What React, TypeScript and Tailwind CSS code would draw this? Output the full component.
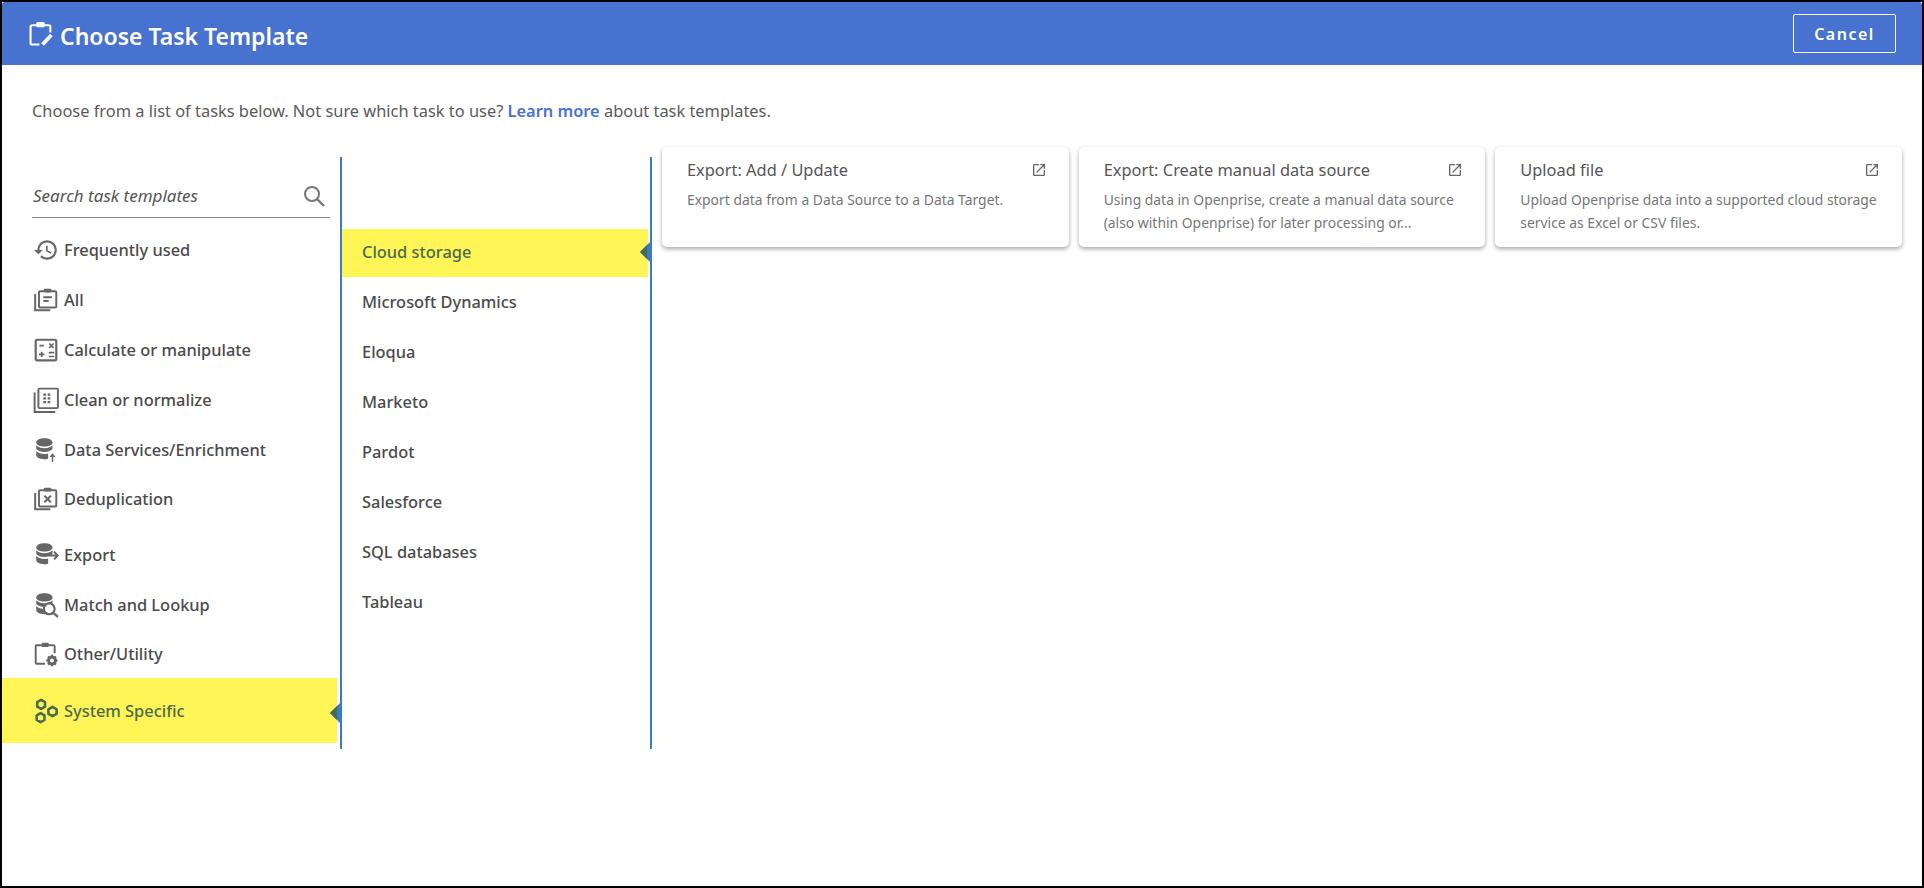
import React from "react";

const FONT = { fontFamily: '"Noto Sans", "Open Sans", sans-serif' };

function Ic({ children, className = "" }: { children: React.ReactNode; className?: string }) {
  return (
    <svg viewBox="0 0 24 24" width="26" height="26" fill="none" stroke="currentColor" strokeWidth="1.8" className={className}>
      {children}
    </svg>
  );
}

const History = () => (
  <svg viewBox="0 0 24 24" width="26" height="26" fill="currentColor">
    <path d="M13 3a9 9 0 0 0-9 9H1l3.89 3.89.07.14L9 12H6c0-3.87 3.13-7 7-7s7 3.13 7 7-3.13 7-7 7c-1.93 0-3.68-.79-4.94-2.06l-1.42 1.42A8.954 8.954 0 0 0 13 21a9 9 0 0 0 0-18zm-1 5v5l4.28 2.54.72-1.21-3.5-2.08V8H12z" />
  </svg>
);
const ClipStack = ({ children }: { children?: React.ReactNode }) => (
  <Ic>
    <path d="M2 6.500v15h14" />
    <rect x="5.500" y="4" width="16" height="15" rx="1" />
    <rect x="10" y="1.500" width="7" height="3.500" rx="1" fill="currentColor" stroke="none" />
    {children}
  </Ic>
);
const Calc = () => (
  <Ic>
    <rect x="2.500" y="2.500" width="19" height="19" rx="1.500" strokeWidth="2" />
    <path d="M6 8h4M15 6l4 4M19 6l-4 4M5.500 16h5M8 13.500v5M14.500 14.500h5M14.500 18h5" strokeWidth="1.600" />
  </Ic>
);
const Grid = () => (
  <Ic>
    <path d="M1.500 5v18h19" />
    <rect x="5" y="1.500" width="18" height="18" rx="1" />
    <path d="M9.500 7h2.500M13.500 7h2.500M9.500 10.500h2.500M13.500 10.500h2.500M9.500 14h2.500M13.500 14h2.500" strokeWidth="2" />
  </Ic>
);
const Db = ({ children }: { children?: React.ReactNode }) => (
  <svg viewBox="0 0 24 24" width="26" height="26" fill="currentColor">
    <path d="M3 5c0-2.400 3.700-3.800 7.500-3.800S18 2.600 18 5s-3.700 3.800-7.500 3.800S3 7.400 3 5z" />
    <path d="M3 7.500c1.500 1.900 4.700 2.800 7.500 2.800s6-.9 7.500-2.800V11c-1.500 1.900-4.700 2.800-7.500 2.800S4.500 12.900 3 11z" />
    <path d="M3 13c1.500 1.900 4.700 2.800 7.500 2.800 1.200 0 2.500-.15 3.500-.5V20c-1.200.35-2.500.5-3.500.5-3.800 0-7.500-1.400-7.500-3.800z" />
    {children}
  </svg>
);
const Hex = () => (
  <svg viewBox="0 0 24 24" width="26" height="26" fill="none" stroke="currentColor" strokeWidth="2.400">
    <path d="M7.500 1.800l3.600 2.100v4.100l-3.600 2.100-3.600-2.100V3.900z" strokeLinejoin="round" />
    <path d="M18 8.200l3.800 2.200v4.200L18 16.800l-3.800-2.200v-4.200z" strokeLinejoin="round" />
    <path d="M7 14l3.600 2.100v4.100L7 22.300l-3.600-2.100v-4.100z" strokeLinejoin="round" />
  </svg>
);
const External = () => (
  <svg viewBox="0 0 24 24" width="16" height="16" fill="#666">
    <path d="M19 19H5V5h7V3H5a2 2 0 0 0-2 2v14a2 2 0 0 0 2 2h14c1.100 0 2-.9 2-2v-7h-2v7zM14 3v2h3.590l-9.830 9.830 1.410 1.410L19 6.410V10h2V3h-7z" />
  </svg>
);

const items: { label: string; icon: React.ReactNode; cls: string }[] = [
  { label: "Frequently used", icon: <History />, cls: "h-[50px] mt-[7px]" },
  {
    label: "All",
    icon: (
      <ClipStack>
        <path d="M9.500 9.500h8M9.500 13h5" />
      </ClipStack>
    ),
    cls: "h-[50px]",
  },
  { label: "Calculate or manipulate", icon: <Calc />, cls: "h-[50px]" },
  { label: "Clean or normalize", icon: <Grid />, cls: "h-[50px]" },
  {
    label: "Data Services/Enrichment",
    icon: (
      <Db>
        <path d="M18 23v-6.500M16 18.500l2-2.500 2 2.500" fill="none" stroke="currentColor" strokeWidth="1.300" />
      </Db>
    ),
    cls: "h-[50px]",
  },
  {
    label: "Deduplication",
    icon: (
      <ClipStack>
        <path d="M10.500 9l6 6M16.500 9l-6 6" />
      </ClipStack>
    ),
    cls: "h-[50px] -mt-px",
  },
  {
    label: "Export",
    icon: (
      <Db>
        <path d="M14.500 12.500h8M19.500 9l3.300 3.500-3.300 3.500" fill="none" stroke="currentColor" strokeWidth="1.800" />
      </Db>
    ),
    cls: "h-[50px] mt-[6px]",
  },
  {
    label: "Match and Lookup",
    icon: (
      <Db>
        <circle cx="15" cy="15.500" r="5" fill="#fff" stroke="currentColor" strokeWidth="2" />
        <path d="M18.500 19l4.500 4" fill="none" stroke="currentColor" strokeWidth="2.200" />
      </Db>
    ),
    cls: "h-[50px]",
  },
  {
    label: "Other/Utility",
    icon: (
      <Ic>
        <path d="M11 21H3.500a1 1 0 0 1-1-1V5a1 1 0 0 1 1-1H19a1 1 0 0 1 1 1v6" />
        <rect x="8" y="1.500" width="6.500" height="4" rx="1" fill="currentColor" stroke="none" />
        <circle cx="17.500" cy="18" r="3.200" strokeWidth="2.600" />
        <path d="M17.500 12.800v2M17.500 21.200v2M12.300 18h2M20.700 18h2M13.800 14.300l1.400 1.400M19.800 20.300l1.400 1.400M13.800 21.700l1.400-1.400M19.800 15.700l1.400-1.400" strokeWidth="2" />
      </Ic>
    ),
    cls: "h-[50px] -mt-px",
  },
];

const systems = ["Microsoft Dynamics", "Eloqua", "Marketo", "Pardot", "Salesforce", "SQL databases", "Tableau"];

const cards = [
  { t: "Export: Add / Update", d: "Export data from a Data Source to a Data Target." },
  {
    t: "Export: Create manual data source",
    d: "Using data in Openprise, create a manual data source (also within Openprise) for later processing or...",
  },
  { t: "Upload file", d: "Upload Openprise data into a supported cloud storage service as Excel or CSV files." },
];

const Arrow = ({ cls }: { cls: string }) => (
  <div className={`absolute ${cls} h-[20px] w-[10px] overflow-hidden`}>
    <div className="h-full w-full bg-[#3a7bc8] [clip-path:polygon(100%_0,0_50%,100%_100%)]" />
    <div className="absolute left-0 top-0 h-full w-[7px] bg-[#4a6b50] [clip-path:polygon(100%_15%,0_50%,100%_85%)]" />
  </div>
);

export default function App() {
  return (
    <div style={FONT} className="flex h-screen w-full flex-col overflow-hidden border-2 border-black bg-white text-[#555]">
      <header className="flex h-[63px] shrink-0 items-center justify-between rounded-t-[3px] bg-[#4872d0] pl-[27px] pr-[26px]">
        <div className="flex items-center gap-[6px] text-white">
          <svg viewBox="0 0 24 24" width="25" height="25" fill="none" stroke="#fff" strokeWidth="2">
            <path d="M10 22.500H3a1.500 1.500 0 0 1-1.500-1.500V5.500A1.500 1.500 0 0 1 3 4h16a1.500 1.500 0 0 1 1.500 1.500V11" />
            <rect x="7" y="1" width="8" height="5" rx="1.200" fill="#fff" stroke="none" />
            <path d="M13 22.500l8.500-9" strokeWidth="3.600" />
          </svg>
          <h1 className="pt-[5px] text-[23px] font-semibold leading-none">Choose Task Template</h1>
        </div>
        <button className="h-[39px] w-[103px] rounded-[2px] border border-white text-[16px] font-semibold tracking-[1.5px] text-white">
          Cancel
        </button>
      </header>

      <p className="ml-[30px] mt-[34px] text-[16.400px] leading-[24px] text-[#5a5a5a]">
        Choose from a list of tasks below. Not sure which task to use?{" "}
        <span className="font-semibold text-[#4872d0]">Learn more</span> about task templates.
      </p>

      <div className="mt-[24px] flex items-start">
        <div className="relative mt-[10px] h-[592px] w-[338px] shrink-0">
          <div className="ml-[30px] flex h-[61px] w-[298px] items-center justify-between border-b border-[#888] pl-[1px] pr-[4px] pt-[18px]">
            <span className="text-[17px] italic leading-[24px] text-[#555]">Search task templates</span>
            <svg viewBox="0 0 24 24" width="24" height="24" fill="none" stroke="#777" strokeWidth="2">
              <circle cx="10" cy="10" r="7" />
              <path d="M15 15l7 7" strokeWidth="2.400" />
            </svg>
          </div>
          {items.map((it) => (
            <div key={it.label} className={`flex items-center gap-[5px] pl-[31px] ${it.cls}`}>
              <span className="flex w-[26px] shrink-0 justify-center text-[#666]">{it.icon}</span>
              <span className="text-[16.400px] font-medium text-[#4a4a4a]">{it.label}</span>
            </div>
          ))}
          <div className="-mt-px mr-[3px] flex h-[65px] items-center gap-[5px] bg-[#fff557] pl-[31px] pt-[1px] text-[#4a6b50]">
            <span className="flex w-[26px] shrink-0 justify-center">
              <Hex />
            </span>
            <span className="text-[16.400px] font-medium">System Specific</span>
          </div>
          <Arrow cls="right-0 top-[546px]" />
        </div>

        <div className="relative mt-[10px] h-[592px] w-[312px] shrink-0 border-x-2 border-[#3a7bc8] pt-[72px]">
          <div className="mr-[2px] flex h-[48px] items-center bg-[#fff557] pb-[2px] pl-[20px] text-[16.400px] font-medium text-[#4a6b50]">
            Cloud storage
          </div>
          <Arrow cls="right-0 top-[85px]" />
          {systems.map((s) => (
            <div key={s} className="flex h-[50px] items-center pl-[20px] text-[16.400px] font-medium text-[#4a4a4a]">
              {s}
            </div>
          ))}
        </div>

        <div className="ml-[10px] flex gap-[10px]">
          {cards.map((c) => (
            <div key={c.t} className="h-[100px] w-[406.670px] rounded-[5px] bg-white pl-[25px] pr-[22px] pt-[9px] shadow-[0_2px_4px_rgba(0,0,0,0.35)]">
              <div className="flex h-[28px] items-center justify-between">
                <span className="text-[16.400px] text-[#555]">{c.t}</span>
                <External />
              </div>
              <p className="mt-[4px] line-clamp-2 text-[13.900px] leading-[23px] text-[#777]">{c.d}</p>
            </div>
          ))}
        </div>
      </div>
    </div>
  );
}
